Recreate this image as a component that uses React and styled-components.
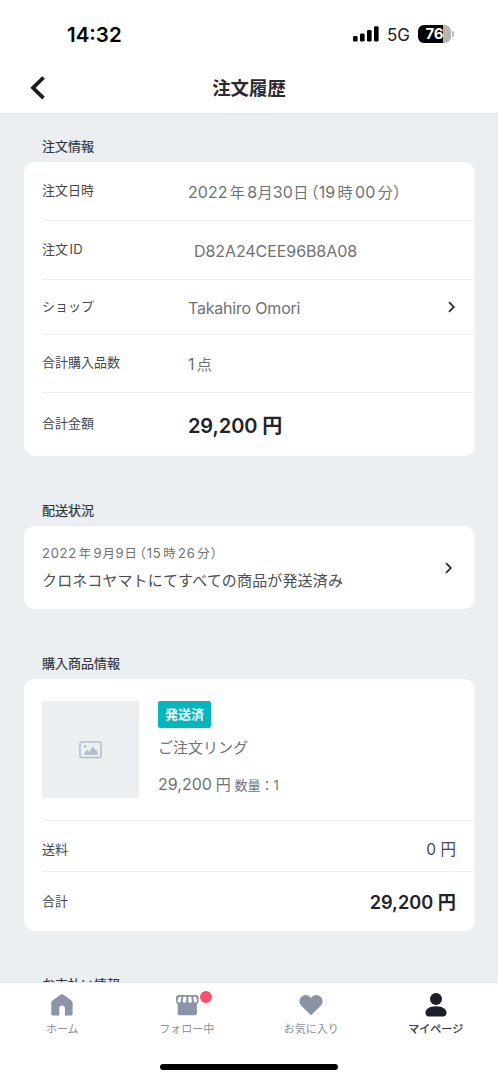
import React from "react";
import styled, { createGlobalStyle } from "styled-components";

const orderRows = [
  { label: "注文日時", height: 58, date: ["2022", "年", "8", "月", "30", "日", "（", "19", "時", "00", "分", "）"] },
  { label: "注文", suffix: "ID", height: 59, value: "D82A24CEE96B8A08", indent: 6, tracking: -0.08 },
  { label: "ショップ", height: 55, value: "Takahiro Omori", link: true, tracking: -0.2 },
  { label: "合計購入品数", height: 58, count: 1 },
  { label: "合計金額", height: 64, value: "29,200 円", strong: true, tracking: -0.1 },
];

const shippedAt = ["2022", "年", "9", "月", "9", "日", "（", "15", "時", "26", "分", "）"];

const DateText = ({ parts, small }) => (
  <DateLine $small={small}>
    {parts.map((part, i) => {
      if (part === "（") return <Paren key={i} $open>{part}</Paren>;
      if (part === "）") return <Paren key={i}>{part}</Paren>;
      if (/\d/.test(part)) return part;
      const wide = part === "年" || part === "時" || part === "分";
      return <Unit key={i} $wide={wide} $end={part === "分"}>{part}</Unit>;
    })}
  </DateLine>
);

const Chevron = () => (
  <svg width="8" height="12" viewBox="0 0 8 12" fill="none" stroke="#36373b" strokeWidth="1.9">
    <path d="M1 1.2 5.800 6 1 10.800" />
  </svg>
);

const App = () => {
  return <>
    <GlobalStyle />
    <Screen>
      <StatusBar>
        <Clock>14:32</Clock>
        <StatusIcons>
          <svg width="26" height="16" viewBox="0 0 26 16" fill="#000">
            <rect x="0" y="10" width="4.6" height="5.6" rx="1.3" />
            <rect x="7" y="7.4" width="4.6" height="8.2" rx="1.3" />
            <rect x="14" y="4" width="4.6" height="11.6" rx="1.3" />
            <rect x="21" y="0.3" width="4.6" height="15.3" rx="1.3" />
          </svg>
          <Network>5G</Network>
          <Battery>76</Battery>
          <BatteryTip />
        </StatusIcons>
      </StatusBar>
      <Header>
        <svg width="15" height="24" viewBox="0 0 15 24" fill="none" stroke="#1d1c24" strokeWidth="3.8">
          <path d="M13.5 1.500 3 11.800l10.500 10.300" />
        </svg>
        <Title>注文履歴</Title>
      </Header>
      <Content>
        <SectionTitle $top={22}>注文情報</SectionTitle>
        <Card>
          {orderRows.map((row) => (
            <Row key={row.label} $height={row.height}>
              <Label>{row.label}{row.suffix && <Suffix>{row.suffix}</Suffix>}</Label>
              <Value $strong={row.strong} $indent={row.indent} $tracking={row.tracking}>
                {row.date && <DateText parts={row.date} />}
                {row.count && <>{row.count}<Unit $wide>点</Unit></>}
                {row.value}
              </Value>
              {row.link && <Chevron />}
            </Row>
          ))}
        </Card>

        <SectionTitle $top={44}>配送状況</SectionTitle>
        <Card>
          <Delivery>
            <div>
              <DateText parts={shippedAt} small />
              <DeliveryText>クロネコヤマトにてすべての商品が発送済み</DeliveryText>
            </div>
            <Chevron />
          </Delivery>
        </Card>

        <SectionTitle $top={44}>購入商品情報</SectionTitle>
        <Card>
          <Product>
            <Thumb>
              <svg width="24" height="18" viewBox="0 0 24 18">
                <rect x="1" y="1" width="21" height="15.4" rx="1.2" fill="none" stroke="#b3bdcb" strokeWidth="1.5" />
                <circle cx="6" cy="5.400" r="1.3" fill="#b3bdcb" />
                <path d="M4.500 13.800 8.300 8.600l2.300 2.400L13.800 5l2.300 4.300 1-1.200 2.400 5.700z" fill="#b3bdcb" />
              </svg>
            </Thumb>
            <div>
              <Badge>発送済</Badge>
              <ProductName>ご注文リング</ProductName>
              <ProductPrice>29,200 <Yen>円</Yen> <small>数量：1</small></ProductPrice>
            </div>
          </Product>
          <SumRow $height={51} $shift={8}>
            <Label>送料</Label>
            <Amount>0 円</Amount>
          </SumRow>
          <SumRow $height={60} $shift={1}>
            <Label>合計</Label>
            <Amount $strong>29,200 円</Amount>
          </SumRow>
        </Card>

        <SectionTitle $top={43}>お支払い情報</SectionTitle>
      </Content>
      <TabBar>
        <Tab>
          <svg width="24" height="24" viewBox="0 0 24 24" fill="#8a94a6">
            <path d="M10.700 1.600a2 2 0 0 1 2.400 0l8.600 6.200a2.200 2.200 0 0 1 .9 1.800V21a1.600 1.600 0 0 1-1.600 1.600h-6.100v-7.200a2.800 2.800 0 0 0-5.600 0v7.200H2.900A1.600 1.600 0 0 1 1.300 21V9.600a2.200 2.200 0 0 1 .9-1.800z" />
          </svg>
          <TabLabel>ホーム</TabLabel>
        </Tab>
        <Tab>
          <svg width="24" height="24" viewBox="0 0 24 24">
            <path d="M2.700 9h19.200v11.300a2 2 0 0 1-2 2H4.700a2 2 0 0 1-2-2z" fill="#8a94a6" />
            <path d="M4 2h16.600a3 3 0 0 1 3 3v3a3 3 0 0 1-3 3H4a3 3 0 0 1-3-3V5a3 3 0 0 1 3-3z" fill="#8a94a6" />
            <path d="M4.200 3.800h2.100l-.5 4.300a1.600 1.600 0 0 1-3.200-.2c0-1.600.5-3 1.600-4.100zM8.300 3.800h3v4.300a1.800 1.800 0 0 1-3.600 0zM13.300 3.800h3l.6 4.300a1.800 1.800 0 0 1-3.600 0zM18.300 3.800h2.100c1.100 1.100 1.600 2.500 1.600 4.100a1.600 1.600 0 0 1-3.200.2z" fill="#fff" />
          </svg>
          <Dot />
          <TabLabel>フォロー中</TabLabel>
        </Tab>
        <Tab>
          <svg width="24" height="24" viewBox="0 0 24 24" fill="#8a94a6">
            <path d="M12 22.300 2.500 13C-.9 9.600.2 4.300 3.900 2.700 6.900 1.300 10 2.200 12 5c2-2.800 5.100-3.700 8.100-2.300 3.700 1.600 4.800 6.900 1.400 10.300z" />
          </svg>
          <TabLabel>お気に入り</TabLabel>
        </Tab>
        <Tab $active>
          <svg width="24" height="24" viewBox="0 0 24 24" fill="#1f1f29">
            <circle cx="12" cy="6" r="6" />
            <path d="M12 13.200c6.300 0 10.600 2.900 10.600 6.500 0 2.800-1.900 3.900-4.200 3.900H5.600c-2.300 0-4.200-1.100-4.200-3.900 0-3.600 4.300-6.500 10.600-6.500z" />
          </svg>
          <TabLabel>マイページ</TabLabel>
        </Tab>
      </TabBar>
      <HomeArea>
        <HomeIndicator />
      </HomeArea>
    </Screen>
  </>
};

export default App;

const GlobalStyle = createGlobalStyle`
  * { box-sizing: border-box; }
  body {
    margin: 0;
    background: #fff;
    font-family: Inter, "Noto Sans CJK JP", sans-serif;
    text-autospace: no-autospace;
    overflow: hidden;
  }
  svg { display: block; flex: none; }
`
const Screen = styled.div`
  display: flex;
  flex-direction: column;
  width: 498px;
  height: 1080px;
`
const StatusBar = styled.div`
  display: flex;
  justify-content: space-between;
  align-items: center;
  flex: none;
  height: 68px;
  padding: 0 44px 0 67px;
`
const Clock = styled.div`
  padding-top: 2px;
  font-size: 20.500px;
  font-weight: 600;
  line-height: 24px;
`
const StatusIcons = styled.div`
  display: flex;
  align-items: center;
`
const Network = styled.span`
  padding-top: 2px;
  margin-left: 8px;
  color: #222;
  font-size: 17px;
  line-height: 20px;
`
const Battery = styled.span`
  width: 33px;
  height: 18px;
  margin-left: 8px;
  border-radius: 6px;
  background: linear-gradient(90deg, #000 76%, #b5b5b5 76%);
  color: #fff;
  font-size: 15px;
  font-weight: 700;
  line-height: 18px;
  text-align: center;
`
const BatteryTip = styled.span`
  width: 2px;
  height: 6px;
  margin-left: 1px;
  border-radius: 0 3px 3px 0;
  background: #b5b5b5;
`
const Header = styled.div`
  display: grid;
  grid-template-columns: 60px 1fr 60px;
  align-items: center;
  flex: none;
  height: 46px;
  padding-bottom: 6px;
  border-bottom: 1px solid #dde1e3;

  svg { margin-left: 30px; }
`
const Title = styled.h1`
  margin: 0;
  color: #2b2a33;
  font-size: 18.400px;
  font-weight: 600;
  line-height: 24px;
  text-align: center;
`
const Content = styled.div`
  flex: 1;
  min-height: 0;
  padding: 0 23px 0 24px;
  overflow: hidden;
  background: #ebeff1;
`
const SectionTitle = styled.h2`
  margin: 0;
  padding: ${({ $top }) => $top}px 0 6px 18px;
  color: #33373c;
  font-size: 13px;
  font-weight: 400;
  line-height: 20px;
  -webkit-text-stroke: 0.2px;
`
const Card = styled.section`
  padding-left: 18px;
  border-radius: 11px;
  background: #fff;
`
const Row = styled.div`
  display: flex;
  align-items: center;
  height: ${({ $height }) => $height}px;
  padding-right: 19px;

  & + & { border-top: 1px solid #edf0f1; }
`
const Label = styled.span`
  width: 146px;
  padding-bottom: 3px;
  color: #46474a;
  font-size: 13px;
  line-height: 20px;
`
const Suffix = styled.span`
  margin-left: 1.500px;
  letter-spacing: 0.3px;
`
const Value = styled.span`
  flex: 1;
  padding: 2px 0 0 ${({ $indent }) => $indent || 0}px;
  color: ${({ $strong }) => ($strong ? "#232329" : "#707173")};
  font-size: ${({ $strong }) => ($strong ? 20 : 16)}px;
  font-weight: ${({ $strong }) => ($strong ? 600 : 400)};
  letter-spacing: ${({ $tracking }) => $tracking || 0}px;
  line-height: 24px;
  white-space: nowrap;
`
const DateLine = styled.div`
  color: #707173;
  font-size: ${({ $small }) => ($small ? 13 : 16)}px;
  letter-spacing: ${({ $small }) => ($small ? 0.7 : 0.04)}px;
  line-height: 24px;
  white-space: nowrap;
`
const Unit = styled.span`
  margin-left: ${({ $wide }) => ($wide ? 0.15 : 0.02)}em;
  margin-right: ${({ $wide, $end }) => ($wide && !$end ? 0.15 : 0)}em;
  font-size: 0.95em;
`
const Paren = styled.span`
  margin-left: ${({ $open }) => ($open ? 0.15 : 0)}em;
  font-feature-settings: "halt";
`
const Delivery = styled.div`
  display: flex;
  justify-content: space-between;
  align-items: center;
  height: 83px;
  padding-right: 22px;
`
const DeliveryText = styled.div`
  margin: 3px 0 2px;
  color: #4c4d50;
  font-size: 15px;
  letter-spacing: 0.150px;
  line-height: 24px;
`
const Product = styled.div`
  display: flex;
  gap: 19px;
  height: 141px;
  padding-top: 22px;
`
const Thumb = styled.div`
  display: flex;
  justify-content: center;
  align-items: center;
  width: 97px;
  height: 97px;
  background: #ebeff1;
`
const Badge = styled.div`
  width: 53px;
  height: 27px;
  border-radius: 2px;
  background: #06b6bf;
  color: #fff;
  font-size: 13px;
  font-weight: 600;
  line-height: 27px;
  text-align: center;
`
const ProductName = styled.div`
  margin-top: 8px;
  color: #707173;
  font-size: 15px;
  line-height: 24px;
`
const ProductPrice = styled.div`
  margin-top: 12px;
  color: #707173;
  font-size: 16px;
  line-height: 24px;
  word-spacing: -0.7px;

  small { font-size: 13px; }
`
const Yen = styled.span`
  font-size: 15px;
`
const SumRow = styled.div`
  display: flex;
  justify-content: space-between;
  align-items: center;
  height: ${({ $height }) => $height}px;
  padding: ${({ $shift }) => $shift}px 19px 0 0;
  border-top: 1px solid #edf0f1;
`
const Amount = styled.span`
  color: ${({ $strong }) => ($strong ? "#232329" : "#46474a")};
  font-size: ${({ $strong }) => ($strong ? 18.200 : 15.500)}px;
  font-weight: ${({ $strong }) => ($strong ? 600 : 400)};
  line-height: 24px;
`
const TabBar = styled.nav`
  display: grid;
  grid-template-columns: repeat(4, 1fr);
  flex: none;
  height: 62px;
  padding-top: 10px;
  border-top: 1px solid #e4e8ea;
`
const Tab = styled.div`
  position: relative;
  display: flex;
  flex-direction: column;
  align-items: center;
  gap: 4px;
  color: ${({ $active }) => ($active ? "#33333b" : "#8b9099")};
  -webkit-text-stroke: ${({ $active }) => ($active ? 0.25 : 0)}px;
`
const TabLabel = styled.span`
  font-size: 11px;
  line-height: 16px;
`
const Dot = styled.span`
  position: absolute;
  top: -2px;
  left: calc(50% + 13px);
  width: 12px;
  height: 12px;
  border-radius: 50%;
  background: #fb4f70;
`
const HomeArea = styled.div`
  display: flex;
  justify-content: center;
  flex: none;
  height: 36px;
  padding-top: 20px;
`
const HomeIndicator = styled.div`
  width: 178px;
  height: 6px;
  border-radius: 3px;
  background: #000;
`
